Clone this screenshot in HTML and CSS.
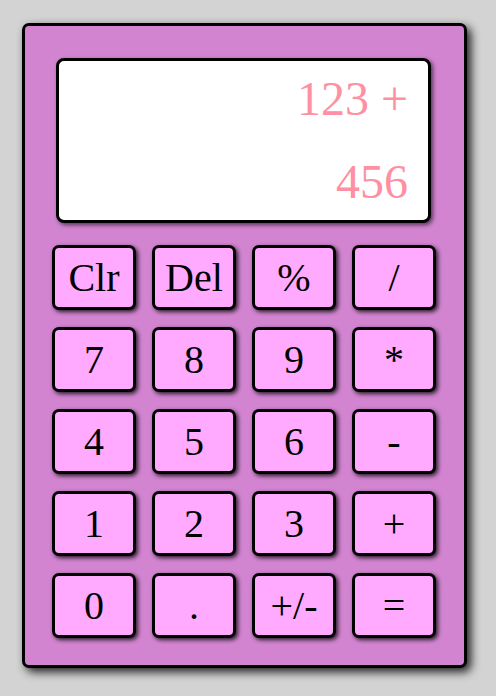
FILE: index.html
```html
<!DOCTYPE html>
<html>
<head>
<meta charset="utf-8">
<link rel="stylesheet" href="styles.css">
</head>
<body>
<div class="calc">
  <div class="display">
    <div class="line">123 +</div>
    <div class="line">456</div>
  </div>
  <div class="keys">
    <button class="key">Clr</button>
    <button class="key">Del</button>
    <button class="key">%</button>
    <button class="key">/</button>
    <button class="key">7</button>
    <button class="key">8</button>
    <button class="key">9</button>
    <button class="key">*</button>
    <button class="key">4</button>
    <button class="key">5</button>
    <button class="key">6</button>
    <button class="key">-</button>
    <button class="key">1</button>
    <button class="key">2</button>
    <button class="key">3</button>
    <button class="key">+</button>
    <button class="key">0</button>
    <button class="key">.</button>
    <button class="key">+/-</button>
    <button class="key">=</button>
  </div>
</div>
</body>
</html>
```
FILE: styles.css
```css
html, body {
  margin: 0;
  padding: 0;
  background: #d3d3d3;
  font-family: "Liberation Serif", "Times New Roman", serif;
}
body {
  padding: 23px 0 0 22px;
  height: 696px;
  box-sizing: border-box;
}
.calc {
  width: 445px;
  height: 645px;
  box-sizing: border-box;
  background: #d284d0;
  border: 3px solid #000;
  border-radius: 7px;
  box-shadow: 4px 4px 10px rgba(0, 0, 0, 0.85);
  padding: 32px 28px 0 27px;
  display: flex;
  flex-direction: column;
}
.display {
  margin: 0 5px 0 4px;
  height: 165px;
  box-sizing: border-box;
  background: #fff;
  border: 3px solid #000;
  border-radius: 8px;
  box-shadow: 2px 2px 4px rgba(0, 0, 0, 0.6);
  padding: 14px 20px 0 0;
  display: flex;
  flex-direction: column;
  align-items: flex-end;
  gap: 35px;
  color: #ff8fa2;
  font-size: 48px;
}
.line {
  line-height: 48px;
}
.keys {
  margin-top: 22px;
  display: grid;
  grid-template-columns: repeat(4, 84px);
  grid-auto-rows: 65px;
  column-gap: 16px;
  row-gap: 17px;
}
.key {
  margin: 0;
  padding: 0;
  box-sizing: border-box;
  background: #ffaaff;
  border: 3px solid #000;
  border-radius: 7px;
  box-shadow: 2px 2px 4px rgba(0, 0, 0, 0.8);
  font-family: "Liberation Serif", "Times New Roman", serif;
  font-size: 40px;
  color: #000;
  line-height: 1;
}
```
